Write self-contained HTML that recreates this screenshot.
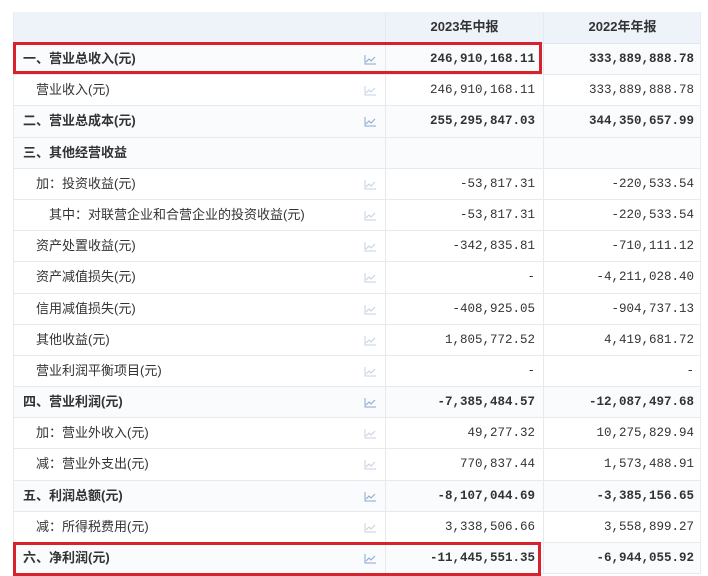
<!DOCTYPE html>
<html><head><meta charset="utf-8"><style>
*{margin:0;padding:0;box-sizing:border-box}
body{width:708px;height:576px;background:#fff;position:relative;overflow:hidden;font-family:"Liberation Sans","Noto Sans CJK SC",sans-serif;font-size:13px;color:#333}
.tbl{position:absolute;left:13px;top:12px;width:688px;border-left:1px solid #e8ebf0;border-right:1px solid #e8ebf0}
.row{height:31.2px;border-bottom:1px solid #e6e9ee;position:relative;line-height:30px}
.hd{height:32px;background:#eef3fa;border-bottom:1px solid #e0e6ef;font-weight:bold;color:#333}
.c1{position:absolute;left:0;width:372px;top:0;bottom:0;border-right:1px solid #e6e9ee}
.c2{position:absolute;left:372px;width:158px;top:0;bottom:0;border-right:1px solid #e6e9ee;text-align:right;padding-right:8px;font-family:"Liberation Mono","Noto Sans CJK SC",monospace;font-size:12.5px}
.c3{position:absolute;left:530px;width:157px;top:0;bottom:0;text-align:right;padding-right:7px;font-family:"Liberation Mono","Noto Sans CJK SC",monospace;font-size:12.5px}
.hd .c2,.hd .c3{text-align:center;padding:0;font-family:"Liberation Sans","Noto Sans CJK SC",sans-serif;font-size:13px}
.lab{position:absolute;left:9px}
.i1 .lab{left:22px}.i2 .lab{left:35px}
.b{font-weight:bold;background:#fafbfd}
.ic{position:absolute;left:350px;top:11px;width:12px;height:10px}
.red{position:absolute;border:3px solid #d9212b}
</style></head><body>
<div class="tbl">
<div class="row hd"><div class="c1"></div><div class="c2">2023年中报</div><div class="c3">2022年年报</div></div>
<div class="row b"><div class="c1"><span class="lab">一、营业总收入(元)</span><svg class="ic" viewBox="0 0 12 10"><path d="M1 0V9H12M2 7L5 4L7 6L11 2" fill="none" stroke="#8aa6cf" stroke-width="1"/></svg></div><div class="c2">246,910,168.11</div><div class="c3">333,889,888.78</div></div>
<div class="row i1"><div class="c1"><span class="lab">营业收入(元)</span><svg class="ic" viewBox="0 0 12 10"><path d="M1 0V9H12M2 7L5 4L7 6L11 2" fill="none" stroke="#c5d0df" stroke-width="1"/></svg></div><div class="c2">246,910,168.11</div><div class="c3">333,889,888.78</div></div>
<div class="row b"><div class="c1"><span class="lab">二、营业总成本(元)</span><svg class="ic" viewBox="0 0 12 10"><path d="M1 0V9H12M2 7L5 4L7 6L11 2" fill="none" stroke="#8aa6cf" stroke-width="1"/></svg></div><div class="c2">255,295,847.03</div><div class="c3">344,350,657.99</div></div>
<div class="row b"><div class="c1"><span class="lab">三、其他经营收益</span></div><div class="c2"></div><div class="c3"></div></div>
<div class="row i1"><div class="c1"><span class="lab">加：投资收益(元)</span><svg class="ic" viewBox="0 0 12 10"><path d="M1 0V9H12M2 7L5 4L7 6L11 2" fill="none" stroke="#c5d0df" stroke-width="1"/></svg></div><div class="c2">-53,817.31</div><div class="c3">-220,533.54</div></div>
<div class="row i2"><div class="c1"><span class="lab">其中：对联营企业和合营企业的投资收益(元)</span><svg class="ic" viewBox="0 0 12 10"><path d="M1 0V9H12M2 7L5 4L7 6L11 2" fill="none" stroke="#c5d0df" stroke-width="1"/></svg></div><div class="c2">-53,817.31</div><div class="c3">-220,533.54</div></div>
<div class="row i1"><div class="c1"><span class="lab">资产处置收益(元)</span><svg class="ic" viewBox="0 0 12 10"><path d="M1 0V9H12M2 7L5 4L7 6L11 2" fill="none" stroke="#c5d0df" stroke-width="1"/></svg></div><div class="c2">-342,835.81</div><div class="c3">-710,111.12</div></div>
<div class="row i1"><div class="c1"><span class="lab">资产减值损失(元)</span><svg class="ic" viewBox="0 0 12 10"><path d="M1 0V9H12M2 7L5 4L7 6L11 2" fill="none" stroke="#c5d0df" stroke-width="1"/></svg></div><div class="c2">-</div><div class="c3">-4,211,028.40</div></div>
<div class="row i1"><div class="c1"><span class="lab">信用减值损失(元)</span><svg class="ic" viewBox="0 0 12 10"><path d="M1 0V9H12M2 7L5 4L7 6L11 2" fill="none" stroke="#c5d0df" stroke-width="1"/></svg></div><div class="c2">-408,925.05</div><div class="c3">-904,737.13</div></div>
<div class="row i1"><div class="c1"><span class="lab">其他收益(元)</span><svg class="ic" viewBox="0 0 12 10"><path d="M1 0V9H12M2 7L5 4L7 6L11 2" fill="none" stroke="#c5d0df" stroke-width="1"/></svg></div><div class="c2">1,805,772.52</div><div class="c3">4,419,681.72</div></div>
<div class="row i1"><div class="c1"><span class="lab">营业利润平衡项目(元)</span><svg class="ic" viewBox="0 0 12 10"><path d="M1 0V9H12M2 7L5 4L7 6L11 2" fill="none" stroke="#c5d0df" stroke-width="1"/></svg></div><div class="c2">-</div><div class="c3">-</div></div>
<div class="row b"><div class="c1"><span class="lab">四、营业利润(元)</span><svg class="ic" viewBox="0 0 12 10"><path d="M1 0V9H12M2 7L5 4L7 6L11 2" fill="none" stroke="#8aa6cf" stroke-width="1"/></svg></div><div class="c2">-7,385,484.57</div><div class="c3">-12,087,497.68</div></div>
<div class="row i1"><div class="c1"><span class="lab">加：营业外收入(元)</span><svg class="ic" viewBox="0 0 12 10"><path d="M1 0V9H12M2 7L5 4L7 6L11 2" fill="none" stroke="#c5d0df" stroke-width="1"/></svg></div><div class="c2">49,277.32</div><div class="c3">10,275,829.94</div></div>
<div class="row i1"><div class="c1"><span class="lab">减：营业外支出(元)</span><svg class="ic" viewBox="0 0 12 10"><path d="M1 0V9H12M2 7L5 4L7 6L11 2" fill="none" stroke="#c5d0df" stroke-width="1"/></svg></div><div class="c2">770,837.44</div><div class="c3">1,573,488.91</div></div>
<div class="row b"><div class="c1"><span class="lab">五、利润总额(元)</span><svg class="ic" viewBox="0 0 12 10"><path d="M1 0V9H12M2 7L5 4L7 6L11 2" fill="none" stroke="#8aa6cf" stroke-width="1"/></svg></div><div class="c2">-8,107,044.69</div><div class="c3">-3,385,156.65</div></div>
<div class="row i1"><div class="c1"><span class="lab">减：所得税费用(元)</span><svg class="ic" viewBox="0 0 12 10"><path d="M1 0V9H12M2 7L5 4L7 6L11 2" fill="none" stroke="#c5d0df" stroke-width="1"/></svg></div><div class="c2">3,338,506.66</div><div class="c3">3,558,899.27</div></div>
<div class="row b"><div class="c1"><span class="lab">六、净利润(元)</span><svg class="ic" viewBox="0 0 12 10"><path d="M1 0V9H12M2 7L5 4L7 6L11 2" fill="none" stroke="#8aa6cf" stroke-width="1"/></svg></div><div class="c2">-11,445,551.35</div><div class="c3">-6,944,055.92</div></div>
</div>
<div class="red" style="left:13px;top:42px;width:529px;height:32px"></div>
<div class="red" style="left:13px;top:542px;width:528px;height:34px"></div>
</body></html>
